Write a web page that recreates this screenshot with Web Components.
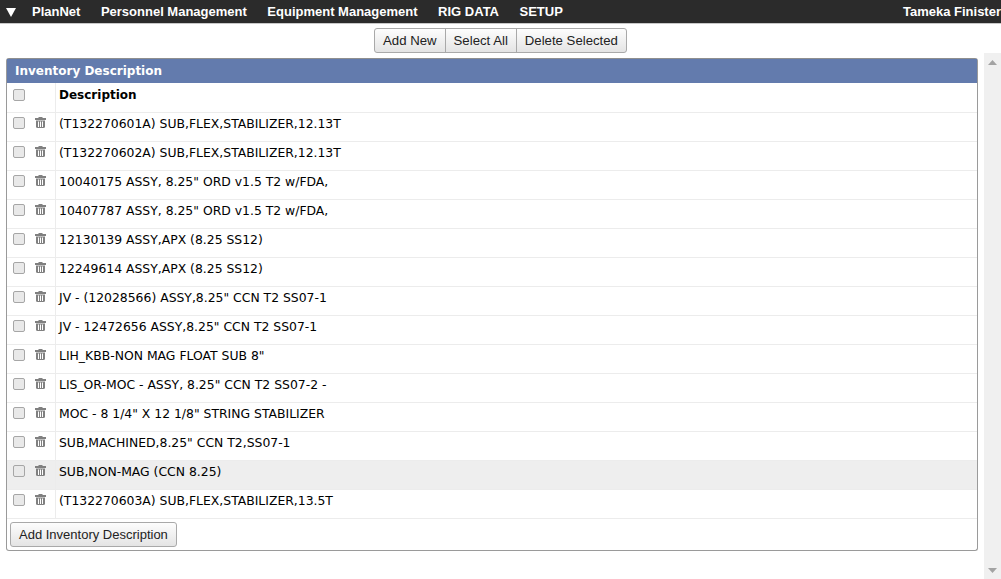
<!DOCTYPE html>
<html>
<head>
<meta charset="utf-8">
<style>
  html, body { margin: 0; padding: 0; height: 579px; overflow: hidden; background: #fff; }
  body { display: flex; flex-direction: column; font-family: "Liberation Sans", Arial, sans-serif; }
</style>
</head>
<body>
<top-nav user="Tameka Finister"></top-nav>
<tool-bar></tool-bar>
<page-body>
  <inventory-panel title="Inventory Description"></inventory-panel>
</page-body>

<script>
class TopNav extends HTMLElement {
  constructor() {
    super();
    this.attachShadow({ mode: 'open' });
    const items = ['PlanNet', 'Personnel Management', 'Equipment Management', 'RIG DATA', 'SETUP'];
    this.shadowRoot.innerHTML = `
      <style>
        :host {
          display: flex;
          align-items: center;
          flex: none;
          height: 23px;
          background: #2b2b2b;
          border-bottom: 1px solid #c8c8c8;
          color: #fff;
          font: bold 13px "Liberation Sans", Arial, sans-serif;
          overflow: hidden;
          white-space: nowrap;
        }
        .arrow { margin: 0 0 0 6px; width: 10px; height: 10px; flex: none; }
        nav { display: flex; gap: 20.5px; margin-left: 16px; }
        .user { margin-left: auto; }
      </style>
      <svg class="arrow" viewBox="0 0 10 10"><path d="M0 1 H10 L5 10 Z" fill="#fff"/></svg>
      <nav>${items.map(i => `<span>${i}</span>`).join('')}</nav>
      <span class="user">${this.getAttribute('user')}</span>
    `;
  }
}

class ToolBar extends HTMLElement {
  constructor() {
    super();
    this.attachShadow({ mode: 'open' });
    this.shadowRoot.innerHTML = `
      <style>
        :host { display: flex; justify-content: center; flex: none; padding-top: 4px; height: 25px; font-size: 13.2px; }
        .group { display: flex; }
        ui-button:not(:first-child) { margin-left: -1px; }
      </style>
      <div class="group">
        <ui-button pos="first">Add New</ui-button>
        <ui-button pos="mid">Select All</ui-button>
        <ui-button pos="last">Delete Selected</ui-button>
      </div>
    `;
  }
}

class UiButton extends HTMLElement {
  constructor() {
    super();
    this.attachShadow({ mode: 'open' });
    const pos = this.getAttribute('pos');
    const radius = pos === 'first' ? '3px 0 0 3px' : pos === 'last' ? '0 3px 3px 0' : pos === 'mid' ? '0' : '3px';
    this.shadowRoot.innerHTML = `
      <style>
        :host { display: block; }
        button {
          display: block;
          height: 25px;
          padding: 0 8px;
          border: 1px solid #a9a9a9;
          border-radius: ${radius};
          background: linear-gradient(#fdfdfd, #e4e4e4);
          color: #222;
          font-family: "Liberation Sans", Arial, sans-serif;
          font-size: inherit;
        }
      </style>
      <button><slot></slot></button>
    `;
  }
}

class PageBody extends HTMLElement {
  constructor() {
    super();
    this.attachShadow({ mode: 'open' });
    this.shadowRoot.innerHTML = `
      <style>
        :host { display: flex; flex: 1; min-height: 0; }
        .content { flex: 1; min-width: 0; padding: 5px 6px 0 6px; }
      </style>
      <div class="content"><slot></slot></div>
      <fake-scrollbar></fake-scrollbar>
    `;
  }
}

class FakeScrollbar extends HTMLElement {
  constructor() {
    super();
    this.attachShadow({ mode: 'open' });
    this.shadowRoot.innerHTML = `
      <style>
        :host {
          display: flex;
          flex-direction: column;
          justify-content: space-between;
          align-items: center;
          flex: none;
          width: 17px;
          background: #f0f0f0;
          box-sizing: border-box;
          padding: 7px 0 6px;
        }
        svg { display: block; width: 9px; height: 5px; }
      </style>
      <svg viewBox="0 0 9 5"><path d="M4.5 0 L9 5 H0 Z" fill="#a3a3a3"/></svg>
      <svg viewBox="0 0 9 5"><path d="M0 0 H9 L4.5 5 Z" fill="#a3a3a3"/></svg>
    `;
  }
}

class InventoryPanel extends HTMLElement {
  constructor() {
    super();
    this.attachShadow({ mode: 'open' });
    const rows = [
      '(T132270601A) SUB,FLEX,STABILIZER,12.13T',
      '(T132270602A) SUB,FLEX,STABILIZER,12.13T',
      '10040175 ASSY, 8.25" ORD v1.5 T2 w/FDA,',
      '10407787 ASSY, 8.25" ORD v1.5 T2 w/FDA,',
      '12130139 ASSY,APX (8.25 SS12)',
      '12249614 ASSY,APX (8.25 SS12)',
      'JV - (12028566) ASSY,8.25" CCN T2 SS07-1',
      'JV - 12472656 ASSY,8.25" CCN T2 SS07-1',
      'LIH_KBB-NON MAG FLOAT SUB 8"',
      'LIS_OR-MOC - ASSY, 8.25" CCN T2 SS07-2 -',
      'MOC - 8 1/4" X 12 1/8" STRING STABILIZER',
      'SUB,MACHINED,8.25" CCN T2,SS07-1',
      'SUB,NON-MAG (CCN 8.25)',
      '(T132270603A) SUB,FLEX,STABILIZER,13.5T'
    ];
    this.shadowRoot.innerHTML = `
      <style>
        :host {
          display: block;
          width: 972px;
          box-sizing: border-box;
          border: 1px solid #9a9a9a;
          border-top-color: #8f8f8f;
          border-radius: 3px;
          background: #fff;
        }
        h2 {
          margin: 0;
          height: 24px;
          padding: 0 0 0 8px;
          background: #637bad;
          color: #fff;
          font: bold 12px/24px "DejaVu Sans", Verdana, sans-serif;
          white-space: nowrap;
        }
        .foot { padding: 3px 3px 3px; font-size: 13px; }
      </style>
      <h2>${this.getAttribute('title')}</h2>
      <inv-row head text="Description"></inv-row>
      ${rows.map((r, i) => `<inv-row ${i === 12 ? 'hover' : ''} text="${r.replace(/"/g, '&quot;')}"></inv-row>`).join('')}
      <div class="foot"><ui-button>Add Inventory Description</ui-button></div>
    `;
    this.shadowRoot.querySelector('.foot ui-button').style.width = 'max-content';
  }
}

class InvRow extends HTMLElement {
  constructor() {
    super();
    this.attachShadow({ mode: 'open' });
    const head = this.hasAttribute('head');
    const trash = head ? '' : `
      <svg class="trash" viewBox="0 0 11 11">
        <path d="M3.5 0 H7.5 V1 H11 V3 H0 V1 H3.5 Z" fill="#808080"/>
        <path d="M1 3.5 H10 V9.5 Q10 11 8.5 11 H2.5 Q1 11 1 9.5 Z" fill="#808080"/>
        <path d="M3.5 4.5 V10 M5.5 4.5 V10 M7.5 4.5 V10" stroke="#fff" stroke-width="1"/>
      </svg>`;
    this.shadowRoot.innerHTML = `
      <style>
        :host {
          display: grid;
          grid-template-columns: 49px 1fr;
          height: 29px;
          box-sizing: border-box;
          border-bottom: 1px solid #ececec;
          font: 12.4px "DejaVu Sans", Verdana, sans-serif;
          color: #000;
        }
        :host([hover]) { background: #eeeeee; }
        :host([head]) { height: 30px; font-weight: bold; font-size: 12px; }
        .ctl {
          display: flex;
          align-items: flex-start;
          gap: 10px;
          padding: 4px 0 0 6px;
          border-right: 1px solid #ececec;
        }
        :host([head]) .ctl { padding-top: 6px; }
        :host([head]) .txt { padding-top: 4px; }
        .box {
          width: 10px;
          height: 10px;
          flex: none;
          border: 1px solid #a6a6a6;
          border-radius: 2px;
          background: #e9e9e9;
        }
        .trash { width: 11px; height: 11px; flex: none; }
        .txt { padding: 3px 0 0 3px; line-height: 16px; white-space: nowrap; }
      </style>
      <div class="ctl"><span class="box"></span>${trash}</div>
      <div class="txt">${this.getAttribute('text').replace(/"/g, '&quot;')}</div>
    `;
  }
}

customElements.define('ui-button', UiButton);
customElements.define('inv-row', InvRow);
customElements.define('top-nav', TopNav);
customElements.define('tool-bar', ToolBar);
customElements.define('fake-scrollbar', FakeScrollbar);
customElements.define('page-body', PageBody);
customElements.define('inventory-panel', InventoryPanel);
</script>
</body>
</html>
